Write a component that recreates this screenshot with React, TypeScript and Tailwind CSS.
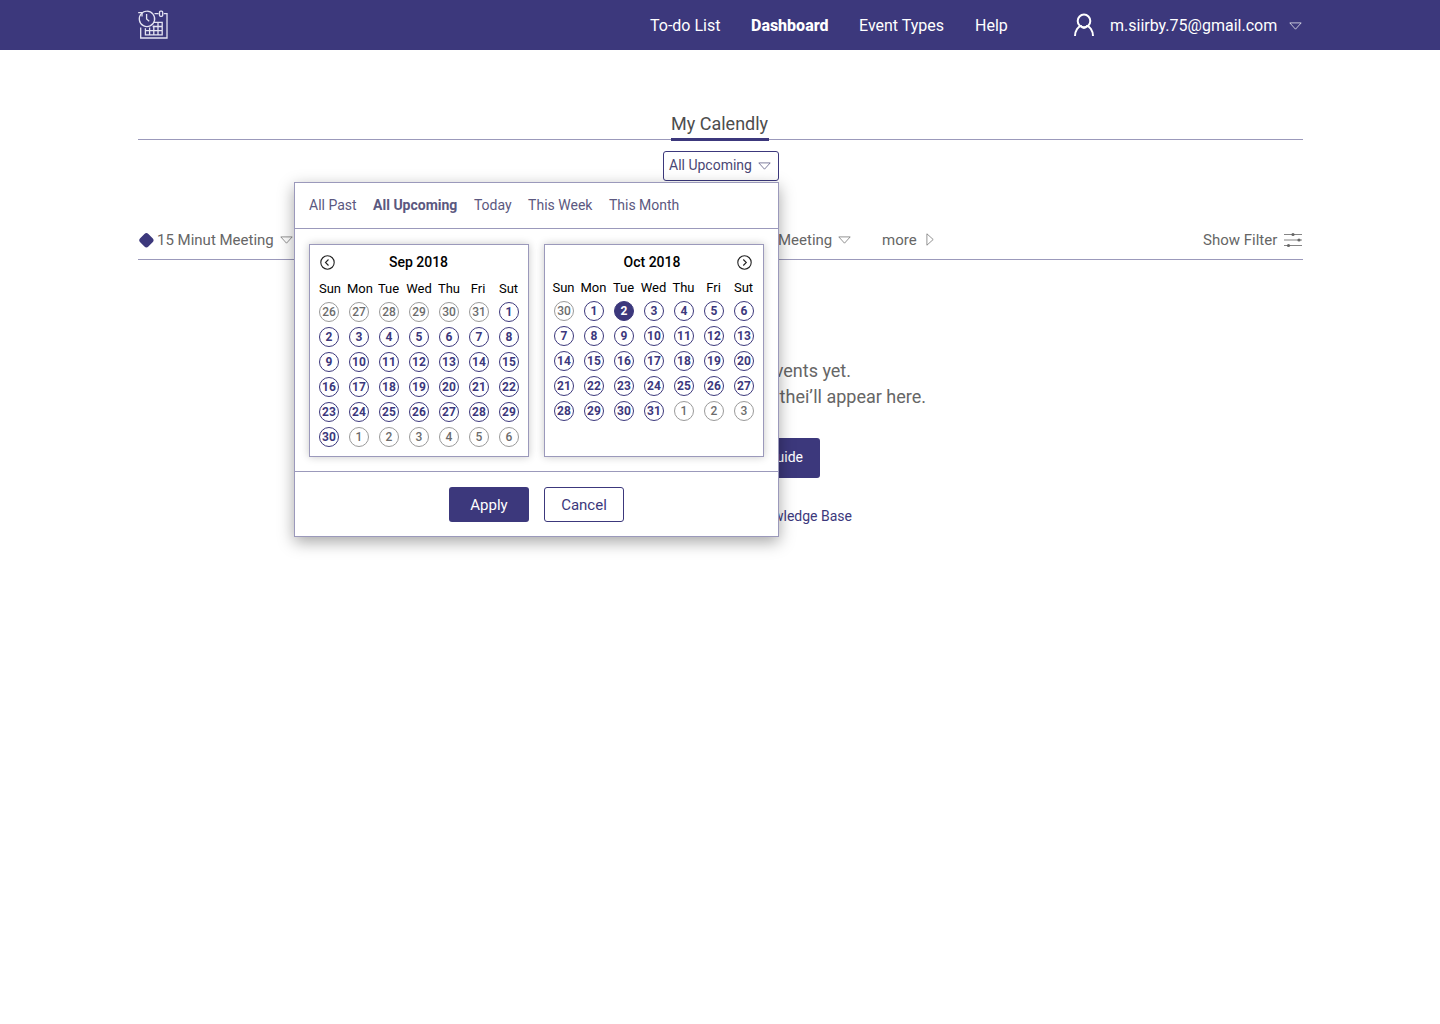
import React from "react";

interface Day {
  n: number;
  out?: boolean;
  selected?: boolean;
}

const WEEKDAYS = ["Sun", "Mon", "Tue", "Wed", "Thu", "Fri", "Sut"];

const range = (from: number, to: number, out = false): Day[] =>
  Array.from({ length: to - from + 1 }, (_, i) => ({ n: from + i, out }));

const september: Day[] = [
  ...range(26, 31, true),
  ...range(1, 30),
  ...range(1, 6, true),
];

const october: Day[] = [
  ...range(30, 30, true),
  ...range(1, 31).map((d) => ({ ...d, selected: d.n === 2 })),
  ...range(1, 3, true),
];

const ranges = ["All Past", "All Upcoming", "Today", "This Week", "This Month"];

const TriangleDown = ({ className = "" }: { className?: string }) => (
  <svg
    className={`w-[13px] h-[8px] shrink-0 ${className}`}
    viewBox="0 0 13 8"
    fill="none"
    stroke="currentColor"
    strokeWidth={0.7}
  >
    <path d="M0.8 0.9h11.4L6.5 7.2z" />
  </svg>
);

const Logo = () => (
  <svg
    className="w-[31px] h-[31px]"
    viewBox="0 0 31 31"
    fill="none"
    stroke="#e4e3f2"
    strokeWidth={1.3}
  >
    {/* Calendar sheet */}
    <path d="M2.7 17.5V28H29V3.6H25.8M20.6 3.6H16.5" />
    <rect x="21.5" y="1.2" width="3.2" height="5.2" rx="1.1" />
    <path d="M16 12.4H24.2V24.8H7.4V18.2M7.4 20.7H24.2M14.6 16.5H24.2M11.6 17.6V24.8M15.8 15.6V24.8M20 12.4V24.8" />
    {/* Clock */}
    <path d="M3.4 3.6A7.7 7.7 0 1 0 8.8 1.2C6.8 1.2 4.8 2 3.4 3.6" />
    <path d="M8.6 4V9L11.2 11.2" />
    <path d="M0.2 2.6H4V6.6" />
  </svg>
);

const Header = () => (
  <header className="h-[50px] bg-[#3c387c] text-white">
    <div className="w-[1165px] h-full ml-[138px] flex items-center">
      <Logo />
      <nav className="ml-auto pt-[2px] flex items-center text-[16px] leading-5 whitespace-nowrap">
        <a className="w-[101px]">To-do List</a>
        <a className="w-[108px] font-extrabold">Dashboard</a>
        <a className="w-[116px]">Event Types</a>
        <a className="w-[98px]">Help</a>
      </nav>
      <div className="pt-[2px] flex items-center w-[230px]">
        <svg
          className="w-[22px] h-[24px] -mt-[2px]"
          viewBox="0 0 22 24"
          fill="none"
          stroke="white"
          strokeWidth={2}
        >
          <circle cx="11" cy="7.9" r="6.3" />
          <path d="M2 23C2 17.5 5.5 13.2 8 13C9.5 15.6 12.5 15.6 14 13C16.5 13.2 20 17.5 20 23" />
        </svg>
        <span className="ml-[15px] w-[179px] text-[16px] leading-5">
          m.siirby.75@gmail.com
        </span>
        <TriangleDown />
      </div>
    </div>
  </header>
);

interface CalendarProps {
  title: string;
  days: Day[];
  prev?: boolean;
  next?: boolean;
}

const Calendar = ({ title, days, prev, next }: CalendarProps) => (
  <div className="relative w-[220px] h-[213px] px-1 bg-white border border-[#9b99bb] shadow-[0_0_8px_rgba(0,0,0,0.22)]">
    <button
      className={`absolute top-[10px] w-[15px] h-[15px] ${prev ? "left-[10px]" : "right-[11px]"}`}
    >
      <svg
        viewBox="0 0 15 15"
        fill="none"
        stroke="#222"
        strokeWidth={1.1}
        className="w-[15px] h-[15px]"
      >
        <circle cx="7.5" cy="7.5" r="6.7" />
        <path d={next ? "M6.3 4.5L9.3 7.5L6.3 10.5" : "M8.5 4.5L5.5 7.5L8.5 10.5"} />
      </svg>
    </button>
    <h4
      className={`pt-[7px] text-center text-[14px] leading-5 font-medium text-black ${prev ? "pr-px" : "pr-[4px]"}`}
    >
      {title}
    </h4>
    <div
      className={`grid text-center text-[13px] leading-4 text-black ${
        prev
          ? "pt-[9px] grid-cols-[32px_28px_29px_32px_28px_30px_31px]"
          : "pt-[8px] grid-cols-[29px_31px_29px_31px_29px_31px_29px]"
      }`}
    >
      {WEEKDAYS.map((d) => (
        <span key={d} className="whitespace-nowrap">
          {d}
        </span>
      ))}
    </div>
    <div className="mt-[5px] grid grid-cols-[repeat(7,30px)] gap-y-[5px] justify-items-center">
      {days.map((d, i) => (
        <span
          key={i}
          className={`w-5 h-5 rounded-full border flex items-center justify-center text-[12px] leading-none ${
            d.selected
              ? "bg-[#3c387c] border-[#3c387c] text-white font-bold"
              : d.out
                ? "border-[#9a9a9a] text-[#6c6c6c] font-medium"
                : "border-[#3c387c] text-[#3c387c] font-bold"
          }`}
        >
          {d.n}
        </span>
      ))}
    </div>
  </div>
);

const DatePopover = () => (
  <div className="absolute top-[31px] right-0 z-10 w-[485px] h-[355px] bg-white border border-[#9b99bb] shadow-[0_5px_15px_rgba(0,0,0,0.35)]">
    <div className="h-[46px] pl-[14px] pb-px flex items-center gap-[16.5px] border-b border-[#9b99bb] text-[14px] leading-5 text-[#5b5880] whitespace-nowrap">
      {ranges.map((r) => (
        <span key={r} className={r === "All Upcoming" ? "font-bold" : ""}>
          {r}
        </span>
      ))}
    </div>
    <div className="h-[243px] pt-[15px] pl-[14px] flex gap-[15px] border-b border-[#9b99bb]">
      <Calendar title="Sep 2018" days={september} prev />
      <Calendar title="Oct 2018" days={october} next />
    </div>
    <div className="pt-[15px] flex justify-center gap-[15px] text-[15px]">
      <button className="w-20 h-[35px] pt-[2px] rounded-[3px] bg-[#3c387c] text-white">
        Apply
      </button>
      <button className="w-20 h-[35px] pt-[2px] rounded-[3px] border border-[#3c387c] text-[#3c387c]">
        Cancel
      </button>
    </div>
  </div>
);

const FilterIcon = () => (
  <svg
    className="w-[19px] h-[16px]"
    viewBox="0 0 19 16"
    stroke="#666"
    strokeWidth={0.8}
    fill="#666"
  >
    <path d="M0 2.5H18M0 8H18M0 13.5H18" />
    <circle cx="9" cy="2.5" r="1.6" stroke="none" />
    <circle cx="15" cy="8" r="1.6" stroke="none" />
    <circle cx="4.5" cy="13.5" r="1.6" stroke="none" />
  </svg>
);

const App = () => {
  return (
    <div className="w-[1440px] h-[1024px] bg-white overflow-hidden font-['Roboto',sans-serif]">
      <Header />
      <main className="w-[1165px] ml-[138px]">
        {/* Tab */}
        <div className="h-[90px] pr-px flex items-end justify-center border-b border-[#9b99bb]">
          <h2 className="w-[98px] h-[29px] text-[18px] leading-6 text-[#4d4d4d] whitespace-nowrap -mb-[2px] border-b-[3px] border-[#3c387c]">
            My Calendly
          </h2>
        </div>

        {/* Date range select */}
        <div className="h-[41px] pt-[11px] flex justify-center">
          <div className="relative left-[0.5px] w-[116px] h-[30px]">
            <button className="w-full h-full pl-[5px] pb-px flex items-center gap-[6px] rounded-[3px] border border-[#3c387c] bg-white text-[14px] text-[#4a4775] whitespace-nowrap">
              All Upcoming
              <TriangleDown className="mt-px" />
            </button>
            <DatePopover />
          </div>
        </div>

        {/* Filters */}
        <div className="h-[79px] pt-[39px] flex items-center border-b border-[#9b99bb] text-[15px] leading-5 text-[#666] whitespace-nowrap">
          <svg className="w-[16px] h-[16px]" viewBox="0 0 16 16">
            <rect
              x="2.6"
              y="2.4"
              width="11.6"
              height="11.6"
              rx="2.8"
              fill="#3c387c"
              transform="rotate(45 8.4 8.2)"
            />
          </svg>
          <span className="ml-[3px] w-[123px]">15 Minut Meeting</span>
          <TriangleDown />
          <span className="ml-auto w-[60px]">Meeting</span>
          <TriangleDown />
          <span className="ml-[31px] w-[44px]">more</span>
          <svg
            className="w-[8px] h-[13px]"
            viewBox="0 0 8 13"
            fill="none"
            stroke="currentColor"
            strokeWidth={0.7}
          >
            <path d="M0.9 0.8v11.4L7.2 6.5z" />
          </svg>
          <span className="ml-[269px] w-[81px]">Show Filter</span>
          <FilterIcon />
        </div>

        {/* Empty state */}
        <section className="pt-[98px] flex flex-col items-center">
          <div className="w-[411px] text-right text-[18px] leading-[26px] text-[#666] whitespace-nowrap">
            <p className="pr-[75px]">events yet.</p>
            <p>thei’ll appear here.</p>
          </div>
          <button className="mt-[28px] w-[199px] h-10 pr-[17px] pb-[2px] rounded-[3px] bg-[#3c387c] text-right text-[14px] text-white">
            Guide
          </button>
          <a className="mt-[28px] w-[263px] text-right text-[14px] leading-5 text-[#3c387c]">
            Knowledge Base
          </a>
        </section>
      </main>
    </div>
  );
};

export default App;
